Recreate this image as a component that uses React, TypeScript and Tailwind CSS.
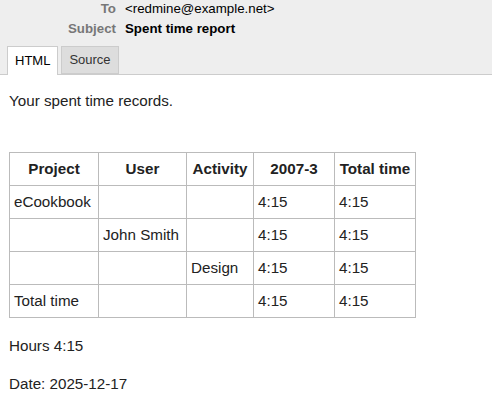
import React from "react";

const rows = [
  { project: "eCookbook", user: "", activity: "", month: "4:15", total: "4:15" },
  { project: "", user: "John Smith", activity: "", month: "4:15", total: "4:15" },
  { project: "", user: "", activity: "Design", month: "4:15", total: "4:15" },
  { project: "Total time", user: "", activity: "", month: "4:15", total: "4:15" },
];

const cell = "border border-[#bbbbbb] px-[4px] py-[7px] leading-[18px] text-left align-middle";
const head = "border border-[#bbbbbb] px-[4px] py-[7px] leading-[18px] text-center font-bold";

export default function App() {
  return (
    <div className="h-[408px] w-[492px] overflow-hidden bg-white font-['Liberation_Sans',Arial,sans-serif] text-[#222]">
      <header className="border-b border-[#cccccc] bg-[#eeeeee] text-[13.3px]">
        <dl className="grid grid-cols-[116px_1fr] gap-x-[9px] gap-y-[4px] pt-[1px] leading-[16px]">
          <dt className="text-right font-bold text-[#777777]">To</dt>
          <dd className="text-black">&lt;redmine@example.net&gt;</dd>
          <dt className="text-right font-bold text-[#777777]">Subject</dt>
          <dd className="font-bold text-black">Spent time report</dd>
        </dl>
        <nav className="mt-[9px] flex gap-[3px] pl-[7px]">
          <button className="-mb-px h-[29px] border border-b-0 border-[#cccccc] bg-white px-[7px] text-[13px] text-black">
            HTML
          </button>
          <button className="h-[28px] border border-[#cccccc] bg-[#dddddd] px-[7px] text-[13px] text-[#333]">
            Source
          </button>
        </nav>
      </header>

      <div className="px-[9px] text-[15.2px]">
        <p className="mt-[17px] leading-[18px]">Your spent time records.</p>

        <table className="mt-[42px] border-collapse">
          <thead>
            <tr>
              <th className={`${head} w-[89px]`}>Project</th>
              <th className={`${head} w-[88px]`}>User</th>
              <th className={`${head} w-[67px]`}>Activity</th>
              <th className={`${head} w-[81px]`}>2007-3</th>
              <th className={`${head} w-[81px]`}>Total time</th>
            </tr>
          </thead>
          <tbody>
            {rows.map((r, i) => (
              <tr key={i}>
                <td className={cell}>{r.project}</td>
                <td className={cell}>{r.user}</td>
                <td className={cell}>{r.activity}</td>
                <td className={cell}>{r.month}</td>
                <td className={cell}>{r.total}</td>
              </tr>
            ))}
          </tbody>
        </table>

        <p className="mt-[19px] leading-[18px]">Hours 4:15</p>
        <p className="mt-[20px] leading-[18px]">Date: 2025-12-17</p>
      </div>
    </div>
  );
}
